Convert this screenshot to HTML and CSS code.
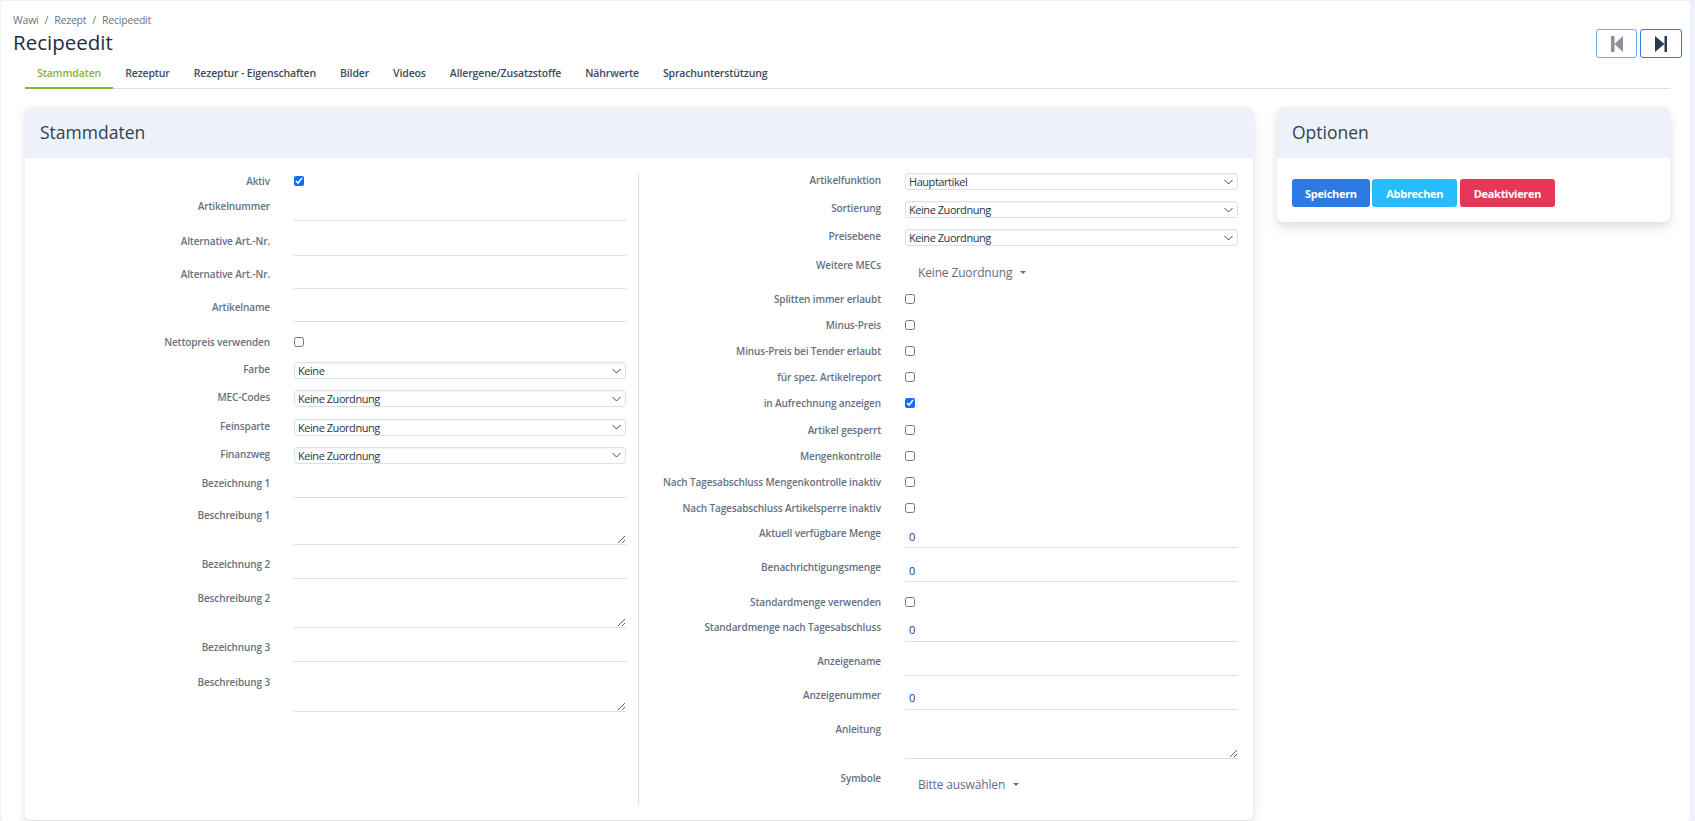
FILE: index.html
```html
<!DOCTYPE html>
<html lang="de">
<head>
<meta charset="utf-8">
<title>Recipeedit</title>
<link rel="stylesheet" href="styles.css">
</head>
<body>
<div class="page">
  <header class="page-head">
    <div class="head-text">
      <nav class="crumbs"><span>Wawi</span><span class="sep">/</span><span>Rezept</span><span class="sep">/</span><span>Recipeedit</span></nav>
      <h1 class="page-title">Recipeedit</h1>
    </div>
    <div class="pager">
      <button class="pager-btn pager-prev" type="button"><svg viewBox="0 0 12 16" width="12" height="16"><path d="M0 0h3.5v16H0zM12 0v16L3.5 8z"/></svg></button>
      <button class="pager-btn pager-next" type="button"><svg viewBox="0 0 12 16" width="12" height="16"><path d="M0 0l9.5 8L0 16zM9.5 0H12v16H9.5z"/></svg></button>
    </div>
  </header>
  <div class="tabs">
    <a class="tab tab-active">Stammdaten</a>
    <a class="tab">Rezeptur</a>
    <a class="tab">Rezeptur - Eigenschaften</a>
    <a class="tab">Bilder</a>
    <a class="tab">Videos</a>
    <a class="tab">Allergene/Zusatzstoffe</a>
    <a class="tab">Nährwerte</a>
    <a class="tab">Sprachunterstützung</a>
  </div>
  <main class="content">
    <section class="card card-main">
      <h2 class="card-head">Stammdaten</h2>
      <div class="card-body form">
        <div class="col col-left">
          <div class="row row-check row-first"><label>Aktiv</label><div><input type="checkbox" checked></div></div>
          <div class="row row-input h32"><label>Artikelnummer</label><input type="text"></div>
          <div class="row row-input h35"><label>Alternative Art.-Nr.</label><input type="text"></div>
          <div class="row row-input h33"><label>Alternative Art.-Nr.</label><input type="text"></div>
          <div class="row row-input h33"><label>Artikelname</label><input type="text"></div>
          <div class="row row-check row-spaced"><label>Nettopreis verwenden</label><div><input type="checkbox"></div></div>
          <div class="row row-select"><label>Farbe</label><select><option>Keine</option></select></div>
          <div class="row row-select"><label>MEC-Codes</label><select><option>Keine Zuordnung</option></select></div>
          <div class="row row-select"><label>Feinsparte</label><select><option>Keine Zuordnung</option></select></div>
          <div class="row row-select"><label>Finanzweg</label><select><option>Keine Zuordnung</option></select></div>
          <div class="row row-input row-short"><label>Bezeichnung 1</label><input type="text"></div>
          <div class="row row-area"><label>Beschreibung 1</label><textarea></textarea></div>
          <div class="row row-input"><label>Bezeichnung 2</label><input type="text"></div>
          <div class="row row-area"><label>Beschreibung 2</label><textarea></textarea></div>
          <div class="row row-input"><label>Bezeichnung 3</label><input type="text"></div>
          <div class="row row-area"><label>Beschreibung 3</label><textarea></textarea></div>
        </div>
        <div class="col col-right">
          <div class="row row-select"><label>Artikelfunktion</label><select><option>Hauptartikel</option></select></div>
          <div class="row row-select"><label>Sortierung</label><select><option>Keine Zuordnung</option></select></div>
          <div class="row row-select"><label>Preisebene</label><select><option>Keine Zuordnung</option></select></div>
          <div class="row row-drop"><label>Weitere MECs</label><button class="drop" type="button">Keine Zuordnung<span class="caret"></span></button></div>
          <div class="row row-check"><label>Splitten immer erlaubt</label><div><input type="checkbox"></div></div>
          <div class="row row-check"><label>Minus-Preis</label><div><input type="checkbox"></div></div>
          <div class="row row-check"><label>Minus-Preis bei Tender erlaubt</label><div><input type="checkbox"></div></div>
          <div class="row row-check"><label>für spez. Artikelreport</label><div><input type="checkbox"></div></div>
          <div class="row row-check"><label>in Aufrechnung anzeigen</label><div><input type="checkbox" checked></div></div>
          <div class="row row-check"><label>Artikel gesperrt</label><div><input type="checkbox"></div></div>
          <div class="row row-check"><label>Mengenkontrolle</label><div><input type="checkbox"></div></div>
          <div class="row row-check"><label>Nach Tagesabschluss Mengenkontrolle inaktiv</label><div><input type="checkbox"></div></div>
          <div class="row row-check"><label>Nach Tagesabschluss Artikelsperre inaktiv</label><div><input type="checkbox"></div></div>
          <div class="row row-input row-after-check"><label>Aktuell verfügbare Menge</label><input type="text" value="0"></div>
          <div class="row row-input"><label>Benachrichtigungsmenge</label><input type="text" value="0"></div>
          <div class="row row-check row-after-input"><label>Standardmenge verwenden</label><div><input type="checkbox"></div></div>
          <div class="row row-input row-after-check"><label>Standardmenge nach Tagesabschluss</label><input type="text" value="0"></div>
          <div class="row row-input"><label>Anzeigename</label><input type="text"></div>
          <div class="row row-input"><label>Anzeigenummer</label><input type="text" value="0"></div>
          <div class="row row-area"><label>Anleitung</label><textarea></textarea></div>
          <div class="row row-drop row-last"><label>Symbole</label><button class="drop" type="button">Bitte auswählen<span class="caret"></span></button></div>
        </div>
      </div>
    </section>
    <aside class="card card-side">
      <h2 class="card-head">Optionen</h2>
      <div class="card-body actions">
        <button class="btn btn-primary" type="button">Speichern</button>
        <button class="btn btn-info" type="button">Abbrechen</button>
        <button class="btn btn-danger" type="button">Deaktivieren</button>
      </div>
    </aside>
  </main>
</div>
</body>
</html>
```
FILE: styles.css
```css
* { box-sizing: border-box; }
html, body { height: 100%; }
body {
  margin: 0;
  overflow: hidden;
  background: #edf2f9;
  font-family: "Open Sans", "Noto Sans", sans-serif;
  color: #344050;
}
.page {
  margin: 1px 5px 0 1px;
  height: 820px;
  background: #fff;
  border-radius: 4px;
  padding: 11px 8px 0 12px;
}
.page-head { display: flex; justify-content: space-between; align-items: flex-start; }
.crumbs { display: flex; font-size: 10.5px; letter-spacing: -.2px; line-height: 16px; color: #6a7583; }
.sep { margin: 0 6px; }
.page-title { margin: 0; font-size: 20.5px; line-height: 28px; font-weight: 500; color: #232e3c; }
.pager { display: flex; gap: 3px; margin-top: 17px; }
.pager-btn {
  width: 41px; height: 29px; padding: 0;
  background: #fff; border: 1px solid #2c7be5; border-radius: 3px;
  display: flex; align-items: center; justify-content: center;
}
.pager-prev { opacity: .65; }
.pager-prev svg { fill: #4d5969; }
.pager-next { width: 42px; }
.pager-next svg { fill: #2b3a52; }
.tabs {
  display: flex;
  height: 31px;
  margin: 0 12px;
  border-bottom: 1px solid #d8e2ef;
}
.tab {
  height: 31px;
  padding: 6px 12px 0;
  font-size: 10.5px;
  letter-spacing: -.14px;
  line-height: 18px;
  font-weight: 600;
  color: #3d4a5c;
  white-space: nowrap;
}
.tab-active { color: #85b52c; border-bottom: 2px solid #85b52c; }
.content { display: flex; gap: 24px; margin: 18px 12px 0; align-items: flex-start; }
.card {
  background: #fff;
  border-radius: 6px;
  box-shadow: 0 7px 14px rgba(65, 69, 88, .1), 0 3px 6px rgba(0, 0, 0, .07);
  overflow: hidden;
}
.card-main { flex: 0 0 1228px; height: 713px; }
.card-side { flex: 1; height: 115px; }
.card-head {
  margin: 0;
  height: 51px;
  padding: 0 15px;
  background: #edf2f9;
  font-size: 17.5px;
  font-weight: 500;
  line-height: 51px;
  color: #344050;
}
.form { display: flex; padding-top: 15px; }
.col { display: flex; flex-direction: column; height: 631px; }
.col-left { flex: 0 0 614px; padding-right: 12px; border-right: 1px solid #d8dce2; }
.col-right { flex: 1; padding-right: 15px; }
.row { display: grid; grid-template-columns: 1fr 332px; column-gap: 24px; }
.col-right .row { grid-template-columns: 1fr 333px; }
.row label {
  font-size: 10px;
  letter-spacing: -.12px;
  line-height: 14px;
  font-weight: 600;
  color: #667181;
  text-align: right;
  white-space: nowrap;
}
.row input[type="checkbox"] { display: block; margin: 0; width: 10px; height: 10px; accent-color: #0d6efd; }
.row-check { height: 26.2px; align-items: center; }
.row-first { height: 16px; }
.row-spaced { margin: 7px 0; }
.row-after-input { margin-top: 6.5px; }
.row-input { height: 34px; align-items: end; }
.row-input label { padding-bottom: 8px; }
.h32 { height: 32px; }
.h33 { height: 33px; }
.h35 { height: 35px; }
.row-short { height: 20.5px; }
.row-after-check { height: 27px; }
.row input[type="text"], .row textarea {
  display: block;
  width: 100%;
  border: 0;
  border-bottom: 1px solid #dcdfe3;
  border-radius: 0;
  background: transparent;
  outline: none;
  padding: 0 4px;
  font: inherit;
  font-size: 11px;
  color: #2f3a48;
}
.row input[type="text"] { height: 23px; }
.row-select { height: 28.2px; align-items: start; }
.row select {
  display: block;
  width: 100%;
  height: 17px;
  padding: 0 16px 0 3px;
  border: 1px solid #d8e2ef;
  border-radius: 3px;
  appearance: none;
  background: #fff url("data:image/svg+xml,%3Csvg xmlns='http://www.w3.org/2000/svg' width='9' height='6' viewBox='0 0 9 6'%3E%3Cpath d='M.5 1l4 4 4-4' fill='none' stroke='%23444' stroke-width='1'/%3E%3C/svg%3E") no-repeat right 4px center;
  font: inherit;
  font-size: 11px;
  letter-spacing: -.45px;
  color: #2b3545;
  box-shadow: inset 0 1px 2px rgba(0, 0, 0, .05);
}
.row-area { height: 49.5px; align-items: end; }
.row-area label { padding-bottom: 23px; }
.row textarea { height: 30px; }
.row-drop { height: 28px; align-items: start; }
.row-last { height: 44px; padding-top: 12px; }
.drop {
  display: flex;
  align-items: center;
  width: max-content;
  height: 20px;
  margin-top: 5px;
  padding: 0 0 0 13px;
  border: 0;
  background: none;
  font: inherit;
  font-size: 12px;
  letter-spacing: -.15px;
  color: #5e6e82;
}
.row-last .drop { margin-top: 3px; }
.caret {
  margin-left: 8px;
  border-top: 3.5px solid #5e6e82;
  border-left: 3px solid transparent;
  border-right: 3px solid transparent;
}
.actions { display: flex; gap: 2.5px; padding: 21px 15px 0; }
.btn {
  height: 28px;
  padding: 0 14px;
  border: 0;
  border-radius: 3px;
  font: inherit;
  font-size: 11px;
  font-weight: 700;
  letter-spacing: -.3px;
  color: #fff;
}
.btn-primary { background: #2c7be5; padding: 0 13px; }
.btn-info { background: #27bcfd; }
.btn-danger { background: #e63757; }
```
